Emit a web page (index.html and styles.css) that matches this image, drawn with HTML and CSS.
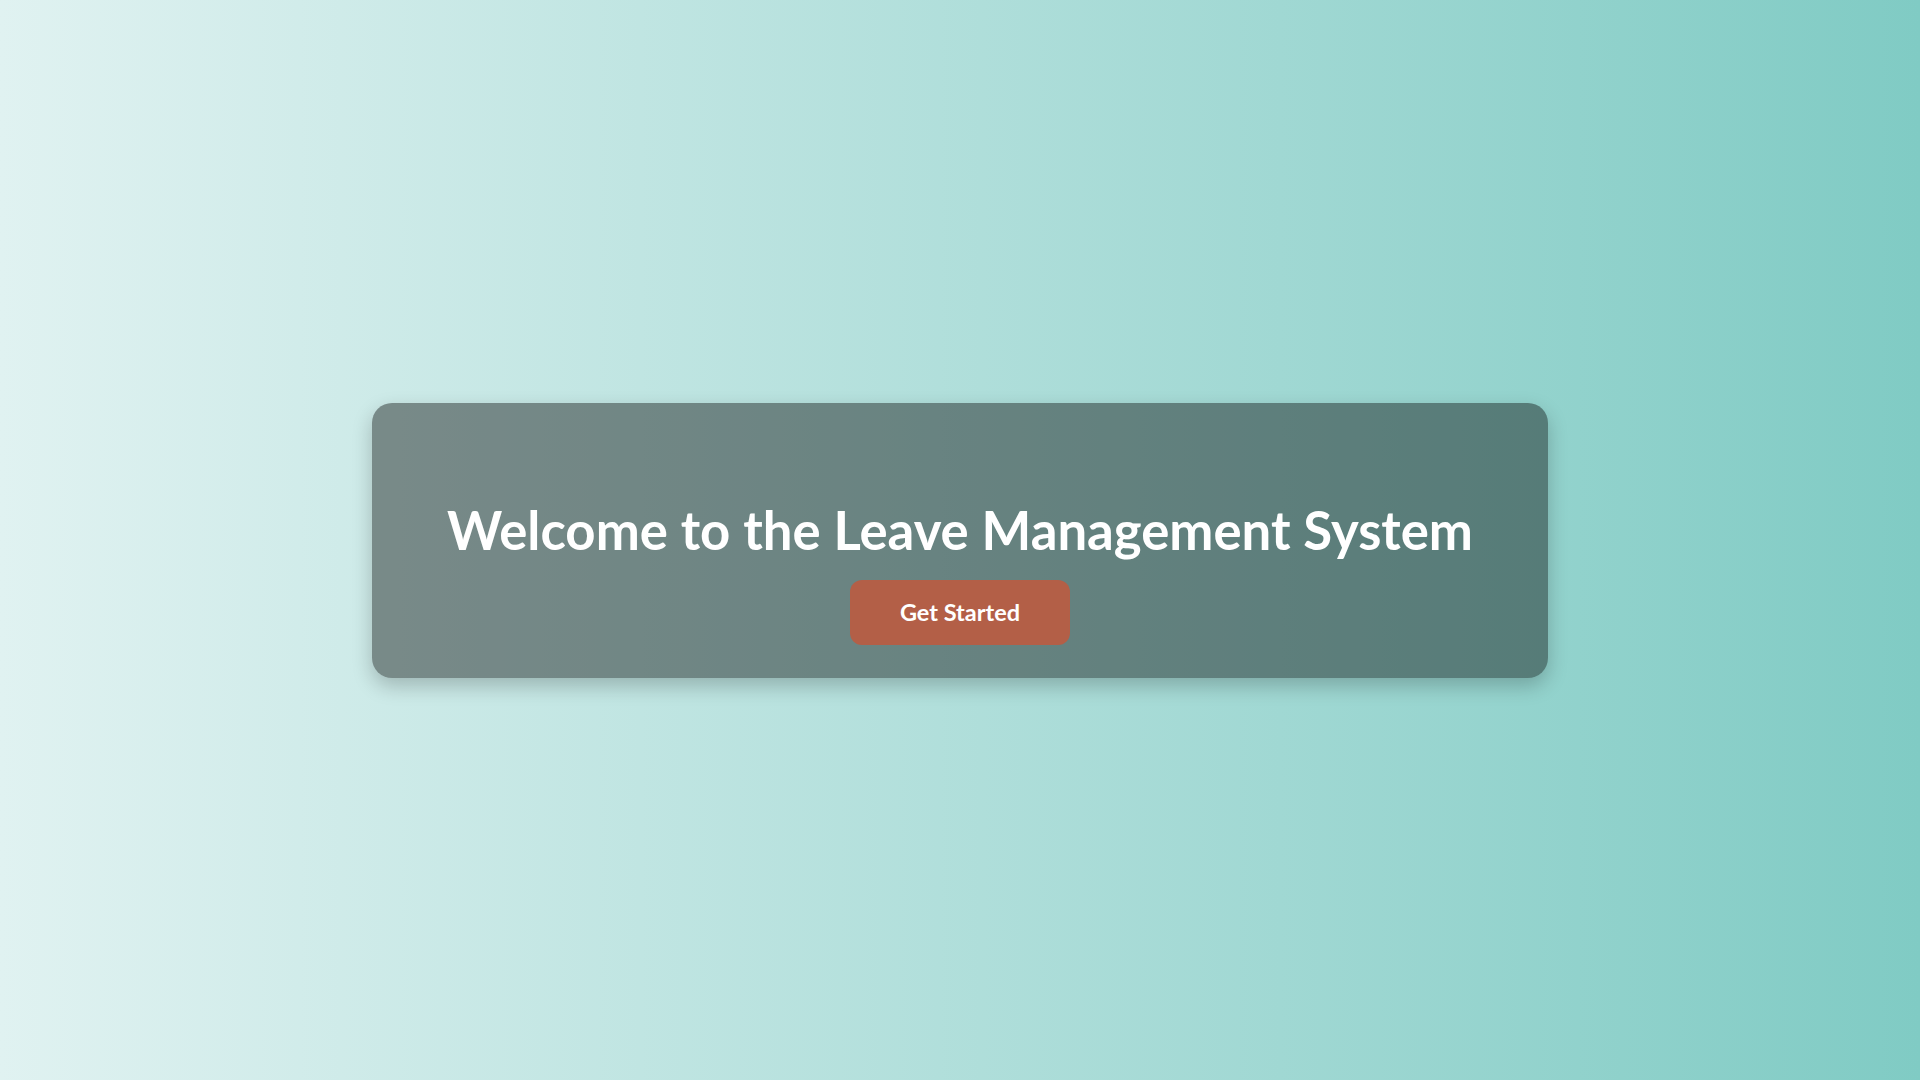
FILE: index.html
```html
<!DOCTYPE html>
<html lang="en">
<head>
<meta charset="UTF-8">
<title>Leave Management System</title>
<link rel="stylesheet" href="styles.css">
</head>
<body>
<main class="page">
  <section class="hero-card">
    <h1 class="hero-title">Welcome to the Leave Management System</h1>
    <button class="hero-button" type="button">Get Started</button>
  </section>
</main>
</body>
</html>
```
FILE: styles.css
```css
html, body {
  margin: 0;
  padding: 0;
  height: 100%;
}
body {
  font-family: Lato, "Noto Sans", sans-serif;
  background: linear-gradient(to right, #e0f2f1, #80cbc4);
}
.page {
  min-height: 100vh;
  display: flex;
  align-items: center;
  justify-content: center;
}
.hero-card {
  width: 1176px;
  height: 275px;
  box-sizing: border-box;
  background: rgba(0, 0, 0, 0.41);
  border-radius: 20px;
  box-shadow: 0 8px 20px rgba(0, 0, 0, 0.22);
  display: flex;
  flex-direction: column;
  align-items: center;
  padding: 0 40px;
}
.hero-title {
  margin: 95px 0 19px;
  color: #ffffff;
  font-size: 52.7px;
  font-weight: 700;
  line-height: 1.2;
  white-space: nowrap;
}
.hero-button {
  flex-shrink: 0;
  width: 220px;
  height: 65px;
  border: none;
  border-radius: 12px;
  background: #b35f47;
  color: #ffffff;
  font-family: inherit;
  font-size: 23.5px;
  font-weight: 700;
  cursor: pointer;
}
```
